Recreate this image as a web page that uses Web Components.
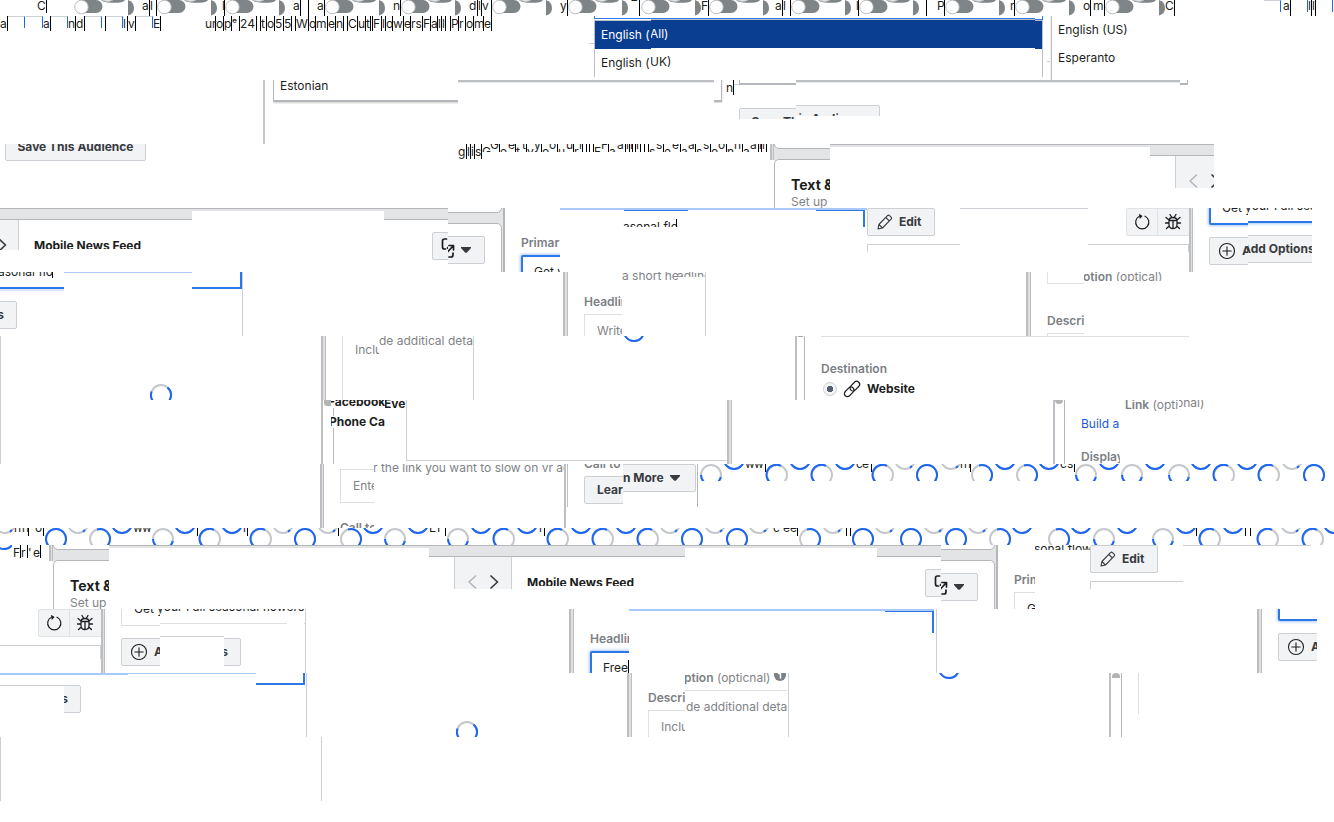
<!DOCTYPE html>
<html lang="en">
<head>
<meta charset="utf-8">
<title>Ad editor sprite sheet</title>
<style>
body{margin:0;background:#fff;font-family:Inter,"Liberation Sans",sans-serif;font-size:12px;line-height:16px;color:#1c1e21}
</style>
</head>
<body>
<sprite-sheet></sprite-sheet>
<script>
const ICONS = {
  left: [10, 16, '<path d="M8.500 2 2 8l6.500 6" stroke="#b0b3b8" stroke-width="1.500"/>'],
  right: [10, 16, '<path d="M2 2 8.500 8 2 14" stroke="#373a3e" stroke-width="1.700"/>'],
  open: [14, 18, '<path d="M5.500 2H3.500Q1.500 2 1.500 4V10q0 2 2 2H4.500M8 16h2q2 0 2-2V12M6.500 11 12 5M8 4.500h4.500V9" stroke="#1c1e21" stroke-width="1.700"/>'],
  down: [10, 6, '<path d="M0 0h10v1L6 5.400q-1 .8-2 0L0 1z" fill="#373a3e"/>'],
  reload: [18, 18, '<path d="M6.500 3.200A6.600 6.600 0 1 0 12 3.200" stroke="#1c1e21" stroke-width="1.200"/><path d="M6 .8 9.600 3 6.800 6z" fill="#1c1e21"/>'],
  bug: [18, 18, '<path d="M5 8Q5 4.500 9 4.500T13 8v3.500q0 4-4 4t-4-4zM5 7.500h8M9 7.500v8M6 1.500l1.500 2.500M12 1.500 10.500 4M2 4.500 5 7M16 4.500 13 7M1.500 10H5M13 10h3.500M2.500 15.500 5.300 13M15.500 15.500 12.700 13" stroke="#1c1e21" stroke-width="1.300"/>'],
  pencil: [16, 16, '<path d="m1 15 .9-4.500 8.600-8.800q1-1 2-.1l1.600 1.600q1 1 0 2l-8.600 8.800zM8.900 3.500l3.300 3.400M1.900 10.500l3.600 3.500" stroke="#373a3e" stroke-width="1.100"/>'],
  plus: [18, 18, '<circle cx="9" cy="9" r="7.500" stroke="#1c1e21" stroke-width="1.100"/><path d="M4.800 9h8.400M9 4.800v8.400" stroke="#1c1e21" stroke-width="1.100"/>'],
  link: [16, 16, '<g transform="rotate(-45 8 8)" stroke="#1c1e21" stroke-width="1.200"><rect x="-1.500" y="5" width="11" height="6" rx="3"/><rect x="6.500" y="5" width="11" height="6" rx="3"/></g>'],
  info: [14, 14, '<circle cx="7" cy="7" r="6" fill="#7b818a"/><path d="M5.500 5.500H7.500V10" stroke="#fff" stroke-width="1.500"/>']
};

const define = (name, css, markup, connect) => {
  const template = document.createElement('template');
  template.innerHTML = `<style>${css}</style>${markup}`;
  customElements.define(name, class extends HTMLElement {
    constructor() {
      super();
      this.attachShadow({ mode: 'open' }).append(template.content.cloneNode(true));
    }
    connectedCallback() { if (connect) connect(this, this.shadowRoot); }
  });
};

define('sprite-row', ':host{display:flex;align-items:flex-start;overflow:hidden}', '<slot></slot>');

define('sprite-tile',
  ':host{display:grid;grid-template:100% / 100%;flex:none;overflow:hidden}::slotted(*){grid-area:1/1;place-self:start;white-space:nowrap}',
  '<slot></slot>');

define('ui-icon', ':host{display:inline-flex}svg{display:block;fill:none;stroke-linecap:round;stroke-linejoin:round;overflow:visible}', '<span></span>',
  (el, root) => {
    const [w, h, body] = ICONS[el.getAttribute('name')];
    root.querySelector('span').innerHTML = `<svg width="${w}" height="${h}" viewBox="0 0 ${w} ${h}" aria-hidden="true">${body}</svg>`;
  });

define('ui-button',
  ':host{display:block}button{display:flex;align-items:center;gap:6px;box-sizing:border-box;height:28px;padding:0 11px;border:1px solid #ccd0d5;border-radius:2px;background:#f2f3f5;color:#373a3e;font:700 12px/16px Inter,sans-serif;white-space:nowrap}:host([icon]) button{padding:0 8px}:host([label]) button{min-width:53px}:host([wide]) button{width:68px;padding:0 9px}:host([menu]) button{width:112px;padding:0 12px}:host([full]) button{width:141px;justify-content:center}:host([add]) button{width:120px}:host([end]) button{width:113px;justify-content:flex-end;padding:0 12px}',
  '<button type="button"><slot></slot></button>',
  (el, root) => {
    if (el.hasAttribute('label')) root.querySelector('button').setAttribute('aria-label', el.getAttribute('label'));
  });

define('ui-field',
  ':host{display:block}input{display:block;box-sizing:border-box;width:350px;height:34px;margin:0;padding:0 12px 2px;border:1px solid #dddfe2;background:#fff;color:#1c1e21;font:12px/16px Inter,sans-serif;outline:0}input::placeholder{color:#7f8388;opacity:1}:host([active]) input{border:2px solid #2d78e6;padding:0 11px 2px;box-shadow:0 0 3px 1px #a9c9f8;border-radius:2px}',
  '<input type="text">',
  (el, root) => {
    const input = root.querySelector('input');
    input.value = el.getAttribute('value') || '';
    input.placeholder = el.getAttribute('hint') || '';
    input.setAttribute('aria-label', el.getAttribute('label'));
  });

define('ui-radio',
  ':host{display:block}label{display:flex;align-items:center;gap:7px;font-weight:700}input{appearance:none;width:14px;height:14px;margin:0;border:1px solid #ccd0d5;border-radius:50%;background:radial-gradient(circle,#565f70 0 3px,#f2f3f5 3px)}',
  '<label><input type="radio" checked><slot></slot></label>');

define('ui-rail', ':host{display:block;box-sizing:border-box;border:solid #bcbec2;border-width:0 1px 0 2px;background:#dfe0e2}', '');

define('ui-spinner', ':host{display:block}svg{display:block;fill:none;stroke-width:2}', '<svg width="24" height="24" viewBox="0 0 24 24"><circle cx="12" cy="12" r="10" stroke="#c4c7cc"/><path d="M18.500 4.400A10 10 0 0 1 12 22 10 10 0 0 1 2.600 8.500" stroke="#1b66f2"/></svg>');

/* Cells are "end:text:kind": k dark caret, b blue caret, n none, s switch, u/d clipped rows. */
define('type-strip',
  ':host{display:flex;overflow:hidden}.c{flex:none;box-sizing:border-box;height:100%;white-space:nowrap}.k,.u{border-right:1px solid #000}.b{border-right:1px solid #1b66f2;height:12px}.h{border-top:1px solid #ccd0d5}.t{display:block;height:0;overflow:visible;margin-top:var(--shift)}.d .t{margin-top:0}svg{display:block}',
  '', (el, root) => {
    let x = +el.getAttribute('from');
    for (const cell of el.getAttribute('cells').split(' ')) {
      const [end, text = '', kind = 'n'] = cell.split(':');
      const box = document.createElement('div');
      box.className = 'c ' + kind.split('').join(' ');
      box.style.width = end - x + 'px';
      if (kind === 's') box.innerHTML = '<svg width="60" height="16" aria-hidden="true"><path d="M8 0H22a6.500 6.500 0 0 1 0 13H8z" fill="#7f8487"/><circle cx="7.500" cy="7" r="6.800" fill="#fff" stroke="#a9adb0" stroke-width=".8"/><path d="M27 0h24q-2 2.800-8 2.700H37Q30 2.700 27 0z" fill="#7f8487"/><path d="M28 0h11q-5 3-11 0z" fill="#fff" stroke="#b7babd" stroke-width=".6"/><path d="M54 0q6 2 6 8t-6 7.500z" fill="#7f8487"/></svg>';
      else if (text) box.innerHTML = `<span class="t">${text}</span>`;
      root.append(box);
      x = +end;
    }
  });

/* Items are "x,kind,style" for rings (t top, o bottom) or "x,x,letter" for glyphs. */
define('spinner-strip', ':host{display:block}svg{display:block;width:100%;height:17px;fill:none}text{fill:#1c1e21;font:12px Inter,sans-serif}', '<svg></svg>',
  (el, root) => {
    const arcs = {
      B: 'M-9.200 4A10 10 0 1 1 9.200 4A10 10 0 0 1-9.200 4', L: 'M-5 8.700A10 10 0 0 1 4-9.200', R: 'M-3-9.500A10 10 0 0 1 5 8.700',
      S: 'M-10 0A10 10 0 0 0-7 7M9.800 2A10 10 0 0 1 7 7', b: 'M-10 0A10 10 0 0 0 10 0', g: 'M7 7L5 8.700'
    };
    const offset = +el.getAttribute('from');
    root.querySelector('svg').innerHTML = el.getAttribute('items').split(' ').map(item => {
      const [x, kind, style] = item.split(',');
      const left = x - offset;
      if (kind === 'c') return `<path d="M${left}.500 0v8" stroke="#000"/>`;
      if (kind === 'x') return `<text x="${left}" y="4">${style}</text>`;
      return `<g transform="translate(${left} ${kind === 't' ? 11 : -5})" stroke-width="2"><circle r="10" stroke="#c4c7cc"/><path d="${arcs[style]}" stroke="#1b66f2"/></g>`;
    }).join('');
  });

const place = (x, y, html) => ({ x, y, html });
const text = (x, base, value, kind = '') => place(x, base - 12, `<span class="${kind}">${value}</span>`);
const title = (x, base, value) => place(x, base - 13, `<span class="title">${value}</span>`);
const fill = (x, y, w, h, color = '#ccd0d5') => place(x, y, `<i style="width:${w}px;height:${h}px;background:${color}"></i>`);
const rail = (x, y, w, h) => place(x, y, `<ui-rail style="width:${w}px;height:${h}px"></ui-rail>`);
const icon = (x, y, name) => place(x, y, `<ui-icon name="${name}"></ui-icon>`);
const button = (x, y, html, attrs = '') => place(x, y, `<ui-button ${attrs}>${html}</ui-button>`);
const field = (x, y, attrs) => place(x, y, `<ui-field ${attrs}></ui-field>`);
const box = (x, y, w, h, css) => place(x, y, `<i style="box-sizing:border-box;width:${w}px;height:${h}px;${css}"></i>`);
const strip = (x, y, w, h, shift, cells) => place(x, y, `<type-strip from="${x}" style="width:${w}px;height:${h}px;--shift:${shift}px" cells="${cells}"></type-strip>`);
const tile = (x, y, w, h, ...items) => ({ x, y, w, h, items });
const row = (y, h, ...tiles) => {
  let at = 0;
  const inner = tiles.map(t => {
    const gap = t.x - at;
    at = t.x + t.w;
    const items = t.items.map(i => `<div style="margin:${i.y - t.y}px 0 0 ${i.x - t.x}px">${i.html}</div>`).join('');
    return `<sprite-tile style="width:${t.w}px;height:${t.h}px;margin:${t.y - y}px 0 0 ${gap}px">${items}</sprite-tile>`;
  }).join('');
  return `<sprite-row style="height:${h}px">${inner}</sprite-row>`;
};

const BAND = '#e3e4e6', EDGE = '#b4b6b9', BLUE = '#2d78e6', PALE = '#a9c9f8', NAVY = '#0a3e91', GREY = '#bcc0c4';
const OPEN = '<ui-icon name="open"></ui-icon><ui-icon name="down"></ui-icon>';
const EDIT = '<ui-icon name="pencil"></ui-icon>Edit';
const ADD = '<ui-icon name="plus"></ui-icon>Add Options';
const MORE = 'Learn More <ui-icon name="down"></ui-icon>';
const band = (x, y, w, h) => box(x, y, w, h, `background:${BAND};border:solid ${EDGE};border-width:1px 0`);
const thin = (x, y, w) => box(x, y, w, 3, `background:${BAND};border-top:1px solid ${EDGE}`);
const cardLeft = (x, y) => [
  fill(x, y, 56, 17, BAND),
  box(x, y - 20, 90, 25, `background:#fff;border:1px solid ${EDGE};border-radius:5px`),
  box(x, y + 15, 90, 80, `background:#fff;border:1px solid ${EDGE};border-radius:5px`)
];
const cardRight = (x, y) => [
  fill(x, y, 56, 64, BAND),
  box(x - 40, y - 20, 94, 25, `background:#fff;border:1px solid ${EDGE};border-radius:5px`),
  box(x - 40, y + 15, 94, 80, `background:#fff;border:1px solid ${EDGE};border-radius:5px`),
  fill(x + 55, y, 2, 64, EDGE)
];
const tools = (x, y) => [
  box(x, y, 64, 28, 'background:#f2f3f5;border:1px solid #dfe3e8;border-radius:2px'),
  fill(x + 31, y, 1, 28, '#dfe3e8'),
  place(x + 7, y + 5, '<button type="button" class="bare" aria-label="Refresh"><ui-icon name="reload"></ui-icon></button>'),
  place(x + 38, y + 5, '<button type="button" class="bare" aria-label="Report a bug"><ui-icon name="bug"></ui-icon></button>')
];

const rows = [
  row(0, 16, tile(0, 0, 1334, 16, strip(0, 0, 1334, 13, -2,
    '37 47:C:k 74'), strip(74, 0, 1260, 16, -2,
    '134::s 142 150:a:k 157:l:k 217::s 222 225:l:k 285::s 293 301:a:k 309::k 317 325:a:k 385::s 393 401:n:k 461::s 469 478:d:k 482:l:k 492:v:k 552::s 560 568:y:k 628::s 631 640:‾:k 641 701::s 709:F:k 769::s 775 783:a:k 791:l:k 851::s 856 859:l:k 919::s 922 927::k 937 945:P:k 1005::s 1010 1015:r:k 1075::s 1083 1091:o:k 1093 1105:m:k 1165::s 1175:C:k 1264 1281::bh 1283 1291:a:k 1308::b 1312:l:k 1316:l:k 1333::b'))),
  row(16, 64,
    tile(0, 16, 589, 15, strip(0, 16, 589, 15, 0,
      '8:a:k 25::bh 26 43::bh 51:a:k 68::bh 76:n:k 85:d:k 102::bh 106::k 123::bh 128:l:k 136:v:k 153::bh 161:E:k 205 216:ur:k 224:o:k 232:p:k 240:ᵉ:k 257:24:k 261::k 267:t:k 275:o:k 284:5:k 292:5:k 296::k 309:W:k 316:o:k 328:m:k 336:e:k 344:n:k 348::k 358:C:k 366:u:k 371:t:k 373::k 382:F:k 386:l:k 393:o:k 404:w:k 411:e:k 423:rs:k 431:F:k 438:a:k 442:l:k 446:l:k 451::k 459:P:k 466:r:k 474:o:k 484:m:k 492:e:k')),
    tile(589, 43, 5, 1, fill(589, 43, 5, 1)),
    tile(594, 16, 57, 61, fill(594, 16, 57, 3, BLUE), fill(595, 16, 56, 2, '#fff'), fill(594, 20, 57, 1, GREY), fill(594, 21, 57, 28, NAVY), fill(594, 20, 1, 57, GREY), text(601, 39, 'English (', 'white'), text(601, 67, 'English (')),
    tile(651, 16, 384, 61, fill(651, 18, 384, 1, BLUE), fill(651, 19, 384, 1, GREY), fill(651, 20, 384, 28, NAVY), text(650, 38, 'All)', 'white'), text(650, 66, 'UK)')),
    tile(1035, 16, 8, 61, box(1035, 0, 8, 20, `border:solid ${BLUE};border-width:0 1px 1px 0`), fill(1035, 20, 8, 1, GREY), fill(1035, 21, 7, 28, NAVY), fill(1042, 20, 1, 57, GREY)),
    tile(1047, 16, 200, 64, fill(1047, 61, 4, 1), fill(1050, 16, 1, 64, '#eee'), fill(1051, 16, 1, 64, GREY), text(1058, 34, 'English (US)'), text(1058, 62, 'Esperanto'))),
  row(80, 64,
    tile(263, 80, 3, 64, fill(263, 80, 2, 64, '#c4c7cc')),
    tile(273, 80, 185, 24, box(273, 60, 220, 42, 'background:#fff;border:solid #b4b8bd;border-width:0 0 2px 1px;box-shadow:0 1px 2px #ccc'), text(280, 90, 'Estonian')),
    tile(458, 80, 256, 4, fill(458, 80, 256, 2, GREY), fill(458, 82, 256, 1, '#e8e9eb')),
    tile(714, 80, 9, 23, box(680, 60, 42, 42, 'background:#fff;border:solid #b4b8bd;border-width:0 1px 2px 0;box-shadow:0 1px 2px #ccc')),
    tile(726, 80, 13, 15, strip(726, 80, 8, 15, 0, '734:n:k'), fill(734, 84, 5, 1)),
    tile(739, 80, 57, 39, box(739, 60, 80, 25, 'border:solid #b4b8bd;border-width:0 0 2px 1px'), button(739, 108, 'Save This Audience', 'full')),
    tile(796, 80, 384, 36, fill(796, 80, 384, 2, GREY), fill(796, 82, 384, 1, '#e8e9eb'), button(739, 105, 'Save This Audience', 'full')),
    tile(1180, 80, 9, 6, box(1160, 60, 28, 25, 'border:solid #b4b8bd;border-width:0 1px 2px 0'))),
  row(144, 64,
    tile(5, 144, 200, 20, button(5, 133, 'Save This Audience', 'full')),
    tile(458, 144, 24, 15, strip(458, 144, 24, 15, 0, '467:g:k 471:l:k 475:i:k 482:s:k')),
    tile(482, 144, 286, 8, strip(482, 144, 286, 8, -7,
      '490:G:d 500:G:u 508:e:d 516:e:u 522:t:d 527:t:u 534:y:d 542:y:u 549:o:d 558:o:u 566:u:d 574:u:u 579:r:d 583:r:u 587::k 590::k 594::k 601:F:d 609:F:u 617:a:d 626:a:u 630:l:u 633:l:u 636::k 641:l:u 645::k 649::k 656:s:d 664:s:u 672:e:d 681:e:u 688:a:d 696:a:u 703:s:d 711:s:u 718:o:d 727:o:u 734:n:d 743:n:u 750:a:d 759:a:u 762:l:u 767:l:u')),
    tile(770, 144, 4, 16, rail(770, 144, 4, 16)),
    tile(774, 144, 56, 64, ...cardLeft(774, 144), title(791, 190, 'Text &amp;'), text(791, 206, 'Set up', 'muted')),
    tile(830, 144, 320, 3, thin(830, 144, 320)),
    tile(1150, 144, 64, 44, band(1150, 144, 64, 12), fill(1175, 156, 39, 32, '#f2f3f5'), fill(1175, 156, 1, 32), icon(1188, 173, 'left'), icon(1210, 173, 'right'))),
  row(208, 64,
    tile(0, 208, 192, 42, band(0, 208, 192, 12), fill(0, 220, 18, 30, '#f2f3f5'), fill(18, 220, 1, 30), icon(-3, 237, 'right'), place(34, 238, '<div style="height:11px;overflow:hidden"><b class="dark">Mobile News Feed</b></div>')),
    tile(192, 208, 192, 3, thin(192, 208, 192)),
    tile(384, 208, 64, 60, band(384, 208, 64, 12), button(432, 232, OPEN, 'icon label="Open preview"')),
    tile(448, 208, 57, 64, ...cardRight(448, 208), button(432, 236, OPEN, 'icon label="Open preview menu"')),
    tile(517, 208, 43, 64, text(521, 247, 'Primary', 'label'), field(521, 255, 'active label="Primary text" value="Get your"')),
    tile(560, 208, 307, 19, fill(560, 208, 307, 2, PALE), fill(624, 210, 64, 1, BLUE), place(623, 219, '<div style="height:8px;overflow:hidden">asonal flo</div>'), fill(676, 219, 1, 8, '#000'), box(816, 210, 49, 30, `border:solid ${BLUE};border-width:1px 2px 0 0`)),
    tile(867, 208, 93, 44, button(867, 208, EDIT, 'wide'), box(867, 244, 120, 20, 'border:solid #ccd0d5;border-width:1px 0 0 1px')),
    tile(960, 208, 128, 1, fill(960, 208, 128, 1)),
    tile(1088, 208, 101, 44, ...tools(1126, 208), box(1060, 244, 129, 20, 'border:solid #ccd0d5;border-width:1px 1px 0 0')),
    tile(1189, 208, 4, 64, rail(1189, 208, 4, 64)),
    tile(1205, 208, 43, 64, field(1209, 191, 'active label="Primary text" value="Get your Fall seasonal"'), button(1209, 237, ADD, 'icon add')),
    tile(1248, 208, 64, 64, field(1209, 189, 'active label="Primary text" value="Get your Fall seasonal"'), button(1209, 235, ADD, 'icon add'))),
  row(272, 64,
    tile(0, 272, 64, 64, place(-2, 264, 'asonal flo'), fill(0, 277, 50, 6, '#fff'), fill(52, 272, 1, 6, '#000'), fill(0, 287, 64, 2, BLUE), fill(0, 289, 64, 2, '#dbe8fc'), button(-96, 301, 's', 'end')),
    tile(64, 272, 128, 1, fill(64, 272, 128, 1, PALE)),
    tile(192, 272, 51, 64, box(180, 250, 62, 39, `border:solid ${BLUE};border-width:0 2px 2px 0`), fill(242, 272, 1, 64)),
    tile(563, 272, 5, 64, rail(563, 272, 5, 64)),
    tile(584, 272, 38, 64, text(584, 306, 'Headline', 'label'), field(584, 314, 'label="Headline" hint="Write a short headline"')),
    tile(622, 272, 84, 64, text(622, 280, 'a short he', 'muted'), place(677, 268, '<div class="muted" style="height:9px;overflow:hidden">adline</div>'), fill(705, 272, 1, 64)),
    tile(1026, 272, 5, 64, rail(1026, 272, 5, 64)),
    tile(1047, 272, 37, 64, field(1047, 250, 'label="Headline"'), text(1047, 325, 'Description', 'label'), field(1047, 333, 'label="Description"')),
    tile(1084, 272, 100, 9, text(1083, 281, '<b>otion</b> (optical)', 'muted'))),
  row(336, 64,
    tile(0, 336, 1, 64, fill(0, 336, 1, 64)),
    tile(149, 336, 24, 64, place(149, 383, '<ui-spinner></ui-spinner>')),
    tile(321, 336, 5, 64, rail(321, 336, 5, 64)),
    tile(342, 336, 37, 64, fill(342, 336, 1, 64, '#dddfe2'), text(355, 354, 'Include', 'muted')),
    tile(379, 336, 95, 64, text(379, 345, 'de additical detai', 'muted'), fill(473, 336, 1, 64)),
    tile(622, 336, 24, 7, place(622, 319, '<ui-spinner></ui-spinner>')),
    tile(795, 336, 10, 64, fill(795, 336, 2, 64, GREY), fill(798, 336, 5, 1, '#aaa'), fill(804, 336, 1, 64, EDGE)),
    tile(821, 336, 368, 64, fill(821, 336, 368, 1, '#dddfe2'), text(821, 373, 'Destination', 'label'), place(823, 381, '<ui-radio><ui-icon name="link"></ui-icon><span>Website</span></ui-radio>'))),
  row(400, 64,
    tile(0, 400, 1, 64, fill(0, 400, 1, 64)),
    tile(321, 400, 10, 64, fill(321, 400, 2, 64, GREY), box(324, 390, 9, 16, 'background:#b4b4b4;border-radius:3px')),
    tile(331, 400, 54, 64, text(328, 406, 'Facebook', 'dark'), text(329, 426, 'Phone Call', 'dark'), fill(333, 408, 1, 8, EDGE), fill(333, 428, 1, 36, EDGE)),
    tile(385, 400, 344, 64, text(384, 408, 'Eve', 'dark'), box(406, 380, 330, 81, 'border:1px solid #ccd0d5')),
    tile(727, 400, 6, 64, rail(727, 400, 5, 64)),
    tile(1053, 400, 12, 64, fill(1053, 400, 2, 64, GREY), box(1055, 396, 8, 8, 'background:#b4b4b4;border-radius:4px'), fill(1064, 400, 1, 64, EDGE)),
    tile(1081, 400, 39, 64, place(1081, 416, '<a href="#build">Build a</a>'), text(1081, 461, 'Display Link', 'label')),
    tile(1120, 400, 59, 64, text(1125, 409, '<b>Link</b> (opti', 'muted')),
    tile(1179, 400, 50, 9, text(1176, 407, 'onal)', 'muted'))),
  row(464, 64,
    tile(320, 464, 4, 64, rail(320, 464, 4, 64)),
    tile(340, 464, 34, 64, field(340, 469, 'label="Display link" hint="Enter the link"'), text(340, 532, 'Call to', 'label')),
    tile(374, 464, 190, 64, text(373, 472, 'r the link you want to slow on vr ad', 'muted')),
    tile(564, 464, 4, 64, fill(564, 464, 2, 64, GREY), fill(567, 464, 1, 43, GREY)),
    tile(584, 464, 39, 64, text(584, 468, 'Call to', 'label'), button(584, 476, MORE, 'menu')),
    tile(623, 464, 75, 43, button(584, 464, MORE, 'menu'), fill(697, 464, 1, 43, EDGE)),
    tile(698, 464, 636, 17, place(698, 464, `<spinner-strip from="698" style="width:636px" items="711,t,S 734,o,b 745,x,w 754,x,w 765,c 777,t,L 800,o,b 822,t,L 845,o,b 856,x,c 862,x,e 871,c 883,t,L 905,o,g 927,t,B 951,o,g 960,x,r 964,x,n 970,c 982,t,R 1005,o,b 1027,t,R 1049,o,b 1060,x,c 1067,x,s 1074,c 1086,t,S 1109,o,b 1132,t,S 1155,o,b 1179,t,S 1201,o,b 1224,t,L 1247,o,b 1269,t,L 1292,o,g 1314,t,B"></spinner-strip>`))),
  row(528, 17, tile(0, 528, 1334, 17, place(0, 528, `<spinner-strip from="0" style="width:1334px" items="5,o,g 14,x,n 22,x,n 28,c 35,x,o 43,c 56,t,B 78,o,g 100,t,R 122,o,b 133,x,w 142,x,w 163,t,S 185,o,b 197,c 210,t,L 232,o,b 243,x,r 247,c 261,t,L 283,o,g 305,t,B 328,o,g 338,c 351,t,R 373,o,b 395,t,S 418,o,b 429,x,E 437,x,F 445,c 458,t,S 481,o,b 504,t,L 527,o,b 539,x,r 544,c 558,t,L 581,o,b 603,t,L 626,o,b 648,t,L 670,o,g 692,t,B 715,o,g 737,t,B 759,o,g 773,x,c 783,x,e 790,x,e 797,c 810,t,R 833,o,g 846,c 850,c 863,t,B 885,o,g 911,t,B 934,o,g 956,t,B 978,o,g 1000,t,R 1022,o,b 1059,t,R 1081,o,b 1104,t,S 1127,o,b 1163,t,S 1186,o,b 1196,c 1210,t,L 1233,o,b 1245,c 1250,c 1268,t,L 1291,o,g 1313,t,L 1334,o,b"></spinner-strip>`))),
  row(545, 64,
    tile(0, 545, 12, 6, place(-8, 527, '<ui-spinner></ui-spinner>')),
    tile(13, 545, 34, 14, strip(13, 545, 34, 13, 0, '21:F:k 28:r:k 33:\' 41:e:k')),
    tile(49, 545, 4, 16, rail(49, 545, 4, 16)),
    tile(53, 545, 56, 64, ...cardLeft(53, 545), title(70, 591, 'Text &amp;'), text(70, 607, 'Set up', 'muted')),
    tile(109, 545, 320, 3, thin(109, 545, 320)),
    tile(429, 545, 256, 44, band(429, 545, 256, 12), fill(454, 557, 58, 32, '#f2f3f5'), fill(454, 557, 1, 32), fill(511, 557, 1, 32), icon(467, 574, 'left'), icon(489, 574, 'right'), place(527, 575, '<div style="height:11px;overflow:hidden"><b class="dark">Mobile News Feed</b></div>')),
    tile(685, 545, 192, 3, thin(685, 545, 192)),
    tile(877, 545, 64, 60, band(877, 545, 64, 12), button(925, 569, OPEN, 'icon label="Open preview"')),
    tile(941, 545, 57, 64, ...cardRight(941, 545), button(925, 573, OPEN, 'icon label="Open preview menu"')),
    tile(1014, 545, 21, 64, text(1014, 584, 'Primary', 'label'), field(1014, 592, 'label="Primary text" value="Get"')),
    tile(1035, 545, 55, 5, text(1034, 553, 'sonal flow')),
    tile(1090, 545, 93, 44, button(1090, 545, EDIT, 'wide'), box(1090, 581, 120, 20, 'border:solid #ccd0d5;border-width:1px 0 0 1px')),
    tile(1183, 545, 128, 1, fill(1183, 545, 128, 1))),
  row(609, 64,
    tile(0, 609, 101, 50, ...tools(38, 609), box(-9, 645, 110, 20, 'border:solid #ccd0d5;border-width:1px 1px 0 0')),
    tile(101, 609, 4, 64, rail(101, 609, 4, 64)),
    tile(121, 609, 39, 64, field(121, 592, 'label="Primary text" value="Get your Fall seasonal"'), button(121, 638, ADD, 'icon add')),
    tile(160, 609, 64, 64, field(121, 590, 'label="Primary text" value="Get your Fall seasonal flowers now"'), fill(160, 636, 64, 1)),
    tile(224, 609, 82, 64, field(121, 590, 'label="Primary text" value="Get your Fall seasonal flowers now"'), fill(287, 623, 17, 1, '#fff'), button(128, 638, 's', 'end'), fill(305, 609, 1, 64)),
    tile(569, 609, 5, 64, rail(569, 609, 5, 64)),
    tile(586, 609, 43, 64, text(590, 643, 'Headline', 'label'), field(590, 651, 'active label="Headline" value="Free"'), fill(628, 660, 1, 13, '#000')),
    tile(629, 609, 256, 2, fill(629, 609, 256, 2, PALE)),
    tile(885, 609, 52, 64, fill(885, 609, 49, 2, PALE), box(870, 611, 64, 22, `border:solid ${BLUE};border-width:1px 2px 0 0`), fill(936, 609, 1, 64)),
    tile(1257, 609, 5, 64, rail(1257, 609, 5, 64)),
    tile(1274, 609, 43, 64, field(1278, 587, 'active label="Headline"'), button(1278, 633, ADD, 'icon add'))),
  row(673, 64,
    tile(0, 673, 64, 64, fill(0, 673, 64, 2, PALE), fill(0, 685, 64, 1)),
    tile(64, 673, 64, 64, fill(64, 673, 64, 2, PALE), button(-32, 685, 's', 'end')),
    tile(128, 673, 128, 1, fill(128, 673, 128, 1, PALE)),
    tile(256, 673, 51, 64, box(240, 650, 65, 35, `border:solid ${BLUE};border-width:0 2px 2px 0`), fill(306, 673, 1, 64)),
    tile(455, 673, 24, 64, place(455, 720, '<ui-spinner></ui-spinner>')),
    tile(627, 673, 5, 64, rail(627, 673, 5, 64)),
    tile(648, 673, 37, 64, text(648, 702, 'Description', 'label'), field(648, 710, 'label="Description" hint="Include additional"')),
    tile(685, 673, 104, 64, text(684, 682, '<b>ption</b> (opticnal)', 'muted'), icon(773, 668, 'info'), fill(685, 690, 102, 1, '#dddfe2'), place(686, 699, '<div class="muted" style="width:101px;overflow:hidden">de additional detai</div>'), fill(788, 673, 1, 64)),
    tile(937, 673, 24, 7, place(937, 656, '<ui-spinner></ui-spinner>')),
    tile(1109, 673, 13, 64, fill(1109, 673, 2, 64, GREY), box(1112, 673, 8, 5, 'background:#b4b4b4;border-radius:4px 4px 0 0'), fill(1121, 673, 1, 64, EDGE)),
    tile(1138, 673, 1, 41, fill(1138, 673, 1, 41, '#dddfe2'))),
  row(737, 85, tile(0, 737, 1, 64, fill(0, 737, 1, 64)), tile(321, 737, 1, 64, fill(321, 737, 1, 64)))
];

define('sprite-sheet',
  ':host{display:block;overflow:hidden}i{display:block}span,b{display:block}.white{color:#fff}.muted{color:#7f8388}.muted b{display:inline;color:#7b7f84;font-weight:600}.label{color:#7b7f84;font-weight:600}.dark{color:#1c1e21;font-weight:700}.title{font-size:14px;font-weight:700}a{color:#1b5bd6;text-decoration:none}.bare{display:block;padding:0;border:0;background:none;line-height:0}',
  rows.join(''));
</script>
</body>
</html>
